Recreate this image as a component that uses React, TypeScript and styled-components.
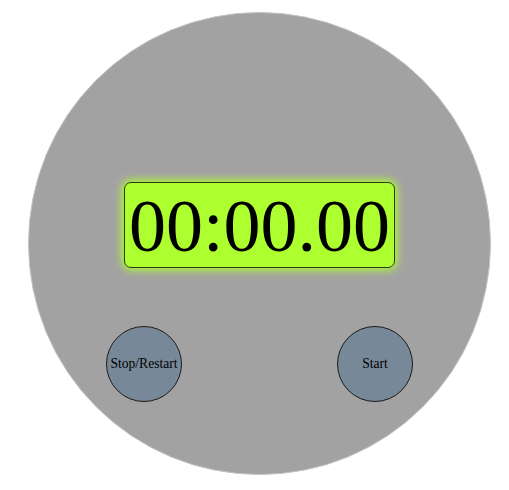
import React from 'react';
import styled, { createGlobalStyle } from 'styled-components';

const GlobalStyle = createGlobalStyle`
  body {
    margin: 0;
    background: #ffffff;
    font-family: "Liberation Serif", "Times New Roman", serif;
  }
`;

const App = () => {
  return (
    <Page>
      <GlobalStyle />
      <Watch>
        <Display>00:00.00</Display>
        <Controls>
          <RoundButton>Stop/Restart</RoundButton>
          <RoundButton>Start</RoundButton>
        </Controls>
      </Watch>
    </Page>
  );
};

const Page = styled.div`
  padding: 12px 0 0 28px;
`;

const Watch = styled.div`
  width: 463px;
  height: 463px;
  box-sizing: border-box;
  border-radius: 50%;
  background: #a3a2a3;
  border: 1px solid #c4c3c4;
  display: flex;
  flex-direction: column;
  align-items: center;
  padding-top: 169px;
`;

const Display = styled.div`
  width: 271px;
  height: 86px;
  box-sizing: border-box;
  background: #adff2f;
  border: 1px solid #2b3a10;
  border-radius: 7px;
  box-shadow: 0 0 8px 2px #adff2f;
  display: flex;
  align-items: center;
  justify-content: center;
  padding-top: 2px;
  font-family: "Liberation Serif", "Times New Roman", serif;
  font-size: 74px;
  line-height: 1;
  color: #000;
`;

const Controls = styled.div`
  align-self: stretch;
  display: flex;
  justify-content: space-between;
  padding: 0 77px;
  margin-top: 58px;
`;

const RoundButton = styled.button`
  width: 76px;
  height: 76px;
  padding: 0;
  border-radius: 50%;
  border: 1px solid #1a1a1a;
  background: #778899;
  color: #000;
  font-family: "Liberation Serif", "Times New Roman", serif;
  font-size: 13.6px;
  white-space: nowrap;
  cursor: pointer;
`;

export default App;
